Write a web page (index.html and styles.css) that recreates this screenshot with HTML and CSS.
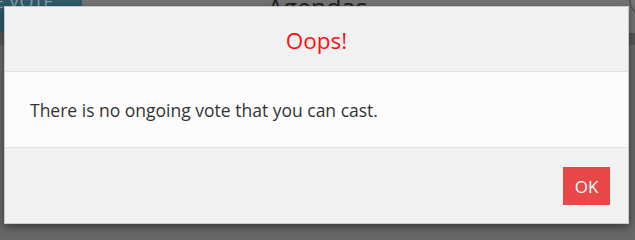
FILE: index.html
```html
<!DOCTYPE html>
<html>
<head>
<meta charset="utf-8">
<link rel="stylesheet" href="styles.css">
</head>
<body>
<div class="page">
  <header class="topbar">
    <div class="brand"><span class="brand-text">E VOTE</span></div>
    <div class="heading">Agendas</div>
    <div class="tools"><div class="avatar"></div></div>
  </header>
  <div class="band"></div>
</div>
<div class="modal">
  <div class="modal-header"><h2 class="modal-title">Oops!</h2></div>
  <div class="modal-body"><p class="message">There is no ongoing vote that you can cast.</p></div>
  <div class="modal-footer"><button class="btn-ok">OK</button></div>
</div>
</body>
</html>
```

FILE: styles.css
```css
html, body {
  margin: 0;
  padding: 0;
  height: 100%;
}
body {
  background: #676767;
  font-family: "Open Sans", "Noto Sans", sans-serif;
  overflow: hidden;
}
.page {
  display: flex;
  flex-direction: column;
}
.topbar {
  height: 33px;
  background: #737373;
  display: grid;
  grid-template-columns: 82px 1fr 82px;
  align-items: start;
  overflow: hidden;
}
.brand {
  height: 33px;
  background: #2e5a6a;
  overflow: hidden;
}
.brand-text {
  display: block;
  margin-top: -8px;
  margin-left: -6px;
  color: #8b9ca2;
  font-size: 18px;
  line-height: 18px;
  white-space: nowrap;
}
.heading {
  text-align: center;
  color: #1e1e1e;
  font-size: 25px;
  line-height: 14px;
  white-space: nowrap;
}
.tools {
  display: flex;
  justify-content: flex-end;
}
.avatar {
  width: 26px;
  height: 26px;
  border: 2px solid #575757;
  border-radius: 50%;
  margin: -14px -24px 0 0;
  flex: none;
}
.band {
  height: 12px;
  background: #565656;
}
.modal {
  position: absolute;
  left: 4px;
  top: 6px;
  width: 623px;
  border: 1px solid #c9c9c9;
  background: #f1f1f1;
  box-shadow: 0 3px 8px rgba(0, 0, 0, 0.45);
  display: flex;
  flex-direction: column;
}
.modal-header {
  height: 64px;
  border-bottom: 1px solid #e2e2e2;
  display: flex;
  align-items: center;
  justify-content: center;
}
.modal-title {
  margin: 0;
  font-weight: 400;
  font-size: 22.5px;
  color: #ff1010;
  padding-top: 2px;
}
.modal-body {
  height: 75px;
  background: #fcfcfc;
  border-bottom: 1px solid #e2e2e2;
  display: flex;
  align-items: center;
  padding: 0 25px;
}
.message {
  margin: 0;
  font-size: 17.5px;
  color: #333;
}
.modal-footer {
  height: 75px;
  display: flex;
  justify-content: flex-end;
  align-items: flex-start;
  padding: 19px 18px 0 0;
  box-sizing: border-box;
}
.btn-ok {
  width: 47px;
  height: 38px;
  border: 0;
  background: #e84848;
  color: #fff;
  font-family: "Open Sans", "Noto Sans", sans-serif;
  font-size: 17px;
  padding: 0;
}
```
